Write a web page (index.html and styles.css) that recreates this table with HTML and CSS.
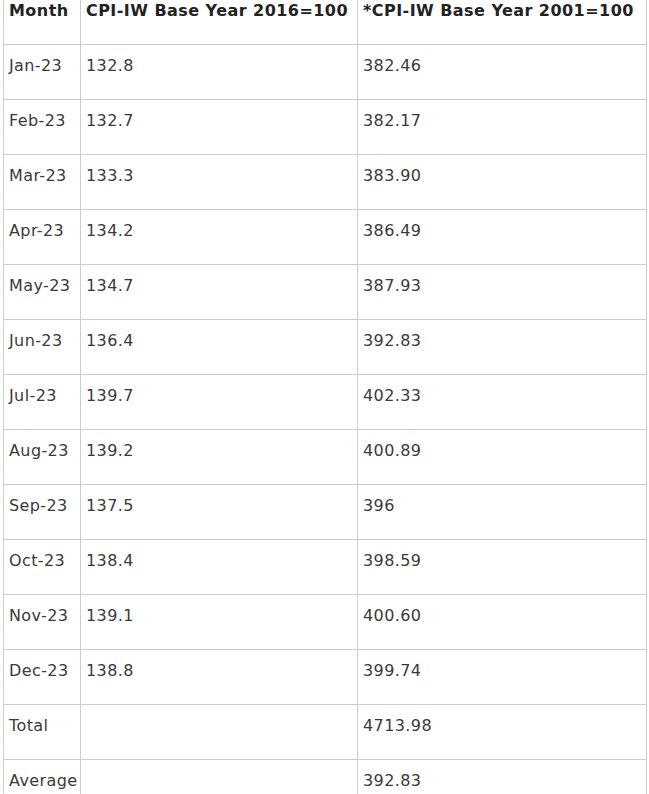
FILE: index.html
```html
<!DOCTYPE html>
<html>
<head>
<meta charset="utf-8">
<link rel="stylesheet" href="styles.css">
</head>
<body>
<table class="cpi">
  <thead>
    <tr><th class="c1">Month</th><th class="c2">CPI-IW Base Year 2016=100</th><th class="c3">*CPI-IW Base Year 2001=100</th></tr>
  </thead>
  <tbody>
    <tr><td>Jan-23</td><td>132.8</td><td>382.46</td></tr>
    <tr><td>Feb-23</td><td>132.7</td><td>382.17</td></tr>
    <tr><td>Mar-23</td><td>133.3</td><td>383.90</td></tr>
    <tr><td>Apr-23</td><td>134.2</td><td>386.49</td></tr>
    <tr><td>May-23</td><td>134.7</td><td>387.93</td></tr>
    <tr><td>Jun-23</td><td>136.4</td><td>392.83</td></tr>
    <tr><td>Jul-23</td><td>139.7</td><td>402.33</td></tr>
    <tr><td>Aug-23</td><td>139.2</td><td>400.89</td></tr>
    <tr><td>Sep-23</td><td>137.5</td><td>396</td></tr>
    <tr><td>Oct-23</td><td>138.4</td><td>398.59</td></tr>
    <tr><td>Nov-23</td><td>139.1</td><td>400.60</td></tr>
    <tr><td>Dec-23</td><td>138.8</td><td>399.74</td></tr>
    <tr><td>Total</td><td></td><td>4713.98</td></tr>
    <tr><td>Average</td><td></td><td>392.83</td></tr>
  </tbody>
</table>
</body>
</html>
```
FILE: styles.css
```css
html, body {
  margin: 0;
  padding: 0;
  background: #fff;
}
body {
  padding-left: 3px;
}
.cpi {
  margin-top: -11px;
  border-collapse: collapse;
  table-layout: fixed;
  width: 643px;
  font-family: "DejaVu Sans", Verdana, sans-serif;
  font-size: 16px;
  letter-spacing: 0.4px;
  color: #3a3a3a;
}
.cpi th, .cpi td {
  border: 1px solid #ccc;
  height: 55px;
  box-sizing: border-box;
  padding: 10px 5px 0 5px;
  vertical-align: top;
  text-align: left;
  line-height: 22px;
  white-space: nowrap;
}
.cpi th {
  font-weight: bold;
  color: #222;
  letter-spacing: 0.45px;
}
.c1 { width: 77px; }
.c2 { width: 277px; }
.c3 { width: 289px; }
```
